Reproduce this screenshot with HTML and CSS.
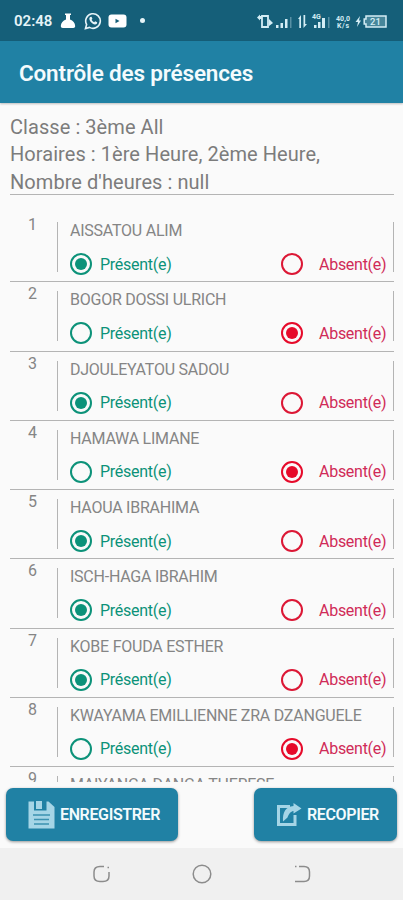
FILE: index.html
```
<!DOCTYPE html>
<html lang="fr">
<head>
  <meta charset="UTF-8" />
  <meta name="viewport" content="width=device-width, initial-scale=1.0"/>
  <title>Contrôle des présences</title>
  <link rel="stylesheet" href="styles.css">
</head>
<body>
  <div class="status-bar">
    <span class="clock">02:48</span>
    <svg class="flask" width="16" height="16" viewBox="0 0 16 16"><path d="M5 .5h6V2h-1v4.500c3 1 5 3.500 5.200 6.500 0 1.300-.7 2-2 2H2.800c-1.300 0-2-.7-2-2C1 10 3 7.500 6 6.500V2H5z" fill="#fff"/></svg>
    <svg class="whatsapp" width="18" height="18" viewBox="0 0 18 18"><path d="M1.500 16.500l1.100-4A7.300 7.300 0 1 1 5.500 15.400z" fill="none" stroke="#e6f4f8" stroke-width="1.600"/><path d="M6.200 5l1.300-.2.900 2-.8 1c.6 1.200 1.400 2 2.600 2.500l1-1 2 1c0 1.500-1 2.300-2.200 2.200C8 12 5.500 9 5.300 6.800c0-.8.400-1.500.9-1.800z" fill="#e6f4f8"/></svg>
    <svg class="youtube" width="19" height="14" viewBox="0 0 19 14"><rect x=".5" y=".5" width="18" height="13" rx="3" fill="#fff"/><path d="M7.500 4.800v4.400L11.500 7z" fill="#155f79"/></svg>
    <span class="dot"></span>
    <svg class="signals" width="134" height="20" viewBox="0 0 134 20" fill="#d3edf5">
      <path d="M5 5h6v11H5z" fill="none" stroke="#d3edf5" stroke-width="1.800"/>
      <path d="M0 6.500l3-3V5h2v3H3v1.500zM12 8l4 4-4 3z"/>
      <path d="M19 14h2.500v3H19zM23.500 12H26v5h-2.500zM28 8h2.500v9H28z"/>
      <path d="M33 6h1.500v11H33z" opacity=".35"/>
      <path d="M41 8l3-4v13h-1.700V8zM46.500 4h1.700v9H50l-3.500 4z"/>
      <text x="55" y="8" font-size="7" font-weight="700">4G</text>
      <path d="M57 14h2.500v3H57zM61 11h2.500v6H61zM65 7h3v10h-3z"/>
      <path d="M71 6h1.500v11H71z" opacity=".35"/>
      <text x="79" y="9.500" font-size="7" font-weight="700" textLength="14">40,0</text>
      <text x="80" y="17" font-size="7" font-weight="700" textLength="12">K/s</text>
      <path d="M103 5l-4.500 6h2.500l-1 5 4-6.500h-2z"/>
      <path d="M109 5h20v11h-20v-3h-1.800V8h1.800z" fill="#47869a" stroke="#d3edf5" stroke-width="1.500"/>
      <text x="113" y="14" font-size="9.500" font-weight="500">21</text>
    </svg>
  </div>

  <header class="app-bar">
    <h1>Contrôle des présences</h1>
  </header>

  <main class="content">
    <div class="infos">
      <div>Classe : 3ème All</div>
      <div>Horaires : 1ère Heure, 2ème Heure,</div>
      <div>Nombre d'heures : null</div>
    </div>
    <div class="liste" id="liste">
      <!-- Student rows -->
    </div>
  </main>

  <div class="actions">
    <button class="btn btn-save">
      <svg width="27" height="28" viewBox="0 0 27 28"><path d="M.500.500h20L26.500 6v21.500H.500z" fill="#a5d5e6"/><path d="M6 0h12.500v9.500H6z" fill="#2081a4"/><path d="M8 0h6v8H8z" fill="#a5d5e6"/><path d="M5 14h17M6 18.500h15M6 23h15" stroke="#3b91b0" stroke-width="1.700"/></svg>
      <span>ENREGISTRER</span>
    </button>
    <button class="btn btn-copy">
      <svg width="26" height="24" viewBox="0 0 26 24"><path d="M14 3.500H2.500v18H19V12" fill="none" stroke="#a5d5e6" stroke-width="3"/><path d="M7 18.500C6.500 9 9.500 4 17.500 3V0l8 5.500-8 5V8c-3.500.5-5 4-6 6.500z" fill="#a5d5e6"/></svg>
      <span>RECOPIER</span>
    </button>
  </div>

  <nav class="nav-bar">
    <svg width="20" height="20" viewBox="0 0 20 20"><path d="M12 2.500H8Q2 2.500 2 8v4q0 5.500 6 5.500h3q6 0 6-5.500V8" /><path d="M15.500 3.500h1.500"/></svg>
    <svg width="20" height="20" viewBox="0 0 20 20"><circle cx="10" cy="10" r="8.800"/></svg>
    <svg width="20" height="20" viewBox="0 0 20 20"><path d="M7 2.500h5q5.500 0 5.500 5.500v4q0 5.500-5.500 5.500H3"/><path d="M3 2.500h1.500"/></svg>
  </nav>

  <script>
    const eleves = [
      { nom: "AISSATOU ALIM", present: true },
      { nom: "BOGOR DOSSI ULRICH", present: false },
      { nom: "DJOULEYATOU SADOU", present: true },
      { nom: "HAMAWA LIMANE", present: false },
      { nom: "HAOUA IBRAHIMA", present: true },
      { nom: "ISCH-HAGA IBRAHIM", present: true },
      { nom: "KOBE FOUDA ESTHER", present: true },
      { nom: "KWAYAMA EMILLIENNE ZRA DZANGUELE", present: false },
      { nom: "MAIYANGA DANGA THERESE" }
    ];

    function renderChoix(eleve) {
      if (eleve.present === undefined) return "";
      return `
        <div class="choix">
          <span class="radio present ${eleve.present ? "checked" : ""}"></span>
          <span class="label-present">Présent(e)</span>
          <span class="radio absent ${eleve.present ? "" : "checked"}"></span>
          <span class="label-absent">Absent(e)</span>
        </div>
      `;
    }

    document.getElementById("liste").innerHTML = eleves.map((eleve, i) => `
      <div class="eleve">
        <div class="numero">${i + 1}</div>
        <div class="fiche">
          <div class="nom">${eleve.nom}</div>
          ${renderChoix(eleve)}
        </div>
      </div>
    `).join("");
  </script>
</body>
</html>
```
FILE: styles.css
```
* {
  box-sizing: border-box;
}

body {
  font-family: Roboto, "Liberation Sans", sans-serif;
  margin: 0;
  height: 900px;
  display: flex;
  flex-direction: column;
  overflow: hidden;
  background: #fafafa;
}

.status-bar {
  height: 41px;
  flex: none;
  display: flex;
  align-items: center;
  padding: 0 13px 0 14px;
  background: #155f79;
  color: #e6f4f8;
}

.clock {
  width: 40px;
  font-size: 15px;
  font-weight: 600;
}

.flask {
  margin-left: 6px;
}

.whatsapp {
  margin-left: 8px;
}

.youtube {
  margin-left: 6px;
}

.dot {
  width: 5px;
  height: 5px;
  margin-left: 13px;
  border-radius: 50%;
  background: #e6f4f8;
}

.signals {
  margin-left: auto;
  margin-right: -1px;
}

.app-bar {
  height: 62px;
  flex: none;
  display: flex;
  align-items: center;
  padding: 2px 19px 0;
  background: #2081a4;
  box-shadow: 0 1px 2px rgba(0,0,0,0.25);
}

h1 {
  margin: 0;
  font-size: 22.500px;
  font-weight: 600;
  letter-spacing: -0.17px;
  color: #f4fbfd;
  white-space: nowrap;
}

.content {
  height: 679px;
  flex: none;
  padding: 10px 9px 0 10px;
  overflow: hidden;
}

.infos {
  height: 82px;
  padding-top: 1px;
  border-bottom: 1px solid #b4b4b4;
  color: #7c7c7c;
  font-size: 20px;
  line-height: 27.400px;
  letter-spacing: 0.06px;
  white-space: nowrap;
}

.liste {
  padding-top: 18px;
}

.eleve {
  height: 69.250px;
  display: flex;
  border-bottom: 1px solid #b4b4b4;
  color: #858585;
}

.numero {
  width: 47px;
  padding-top: 3px;
  padding-right: 2px;
  font-size: 16px;
  line-height: 18px;
  text-align: center;
}

.fiche {
  height: 50px;
  flex: 1;
  margin-top: 9px;
  padding-left: 12px;
  border-left: 1px solid #b4b4b4;
  border-right: 1px solid #b4b4b4;
}

.nom {
  height: 18px;
  font-size: 16px;
  line-height: 18px;
  letter-spacing: -0.24px;
  white-space: nowrap;
}

.choix {
  height: 24px;
  margin-top: 12px;
  display: flex;
  align-items: center;
  font-size: 16px;
  letter-spacing: -0.27px;
}

.radio {
  width: 22px;
  height: 22px;
  flex: none;
  border: 2px solid;
  border-radius: 50%;
}

.radio.checked::before {
  content: "";
  display: block;
  width: 12px;
  height: 12px;
  margin: 3px;
  border-radius: 50%;
  background: currentColor;
}

.present, .label-present {
  color: #0c9279;
}

.absent {
  color: #dc1735;
}

.absent.checked {
  color: #e60a2a;
}

.label-present {
  width: 189px;
  padding-left: 8px;
}

.label-absent {
  padding-left: 16px;
  color: #d02b58;
  white-space: nowrap;
}

.actions {
  height: 66px;
  flex: none;
  display: flex;
  justify-content: space-between;
  align-items: flex-start;
  padding: 6px 6px 0;
}

.btn {
  height: 53px;
  display: flex;
  align-items: center;
  border: none;
  border-radius: 7px;
  background: #2081a4;
  color: #f4fbfd;
  font-family: inherit;
  font-size: 16px;
  font-weight: 600;
  letter-spacing: -0.36px;
  white-space: nowrap;
  box-shadow: 0 1px 3px rgba(0,0,0,0.4);
}

.btn span {
  line-height: 24px;
  padding-top: 1px;
}

.btn-save {
  width: 172px;
  padding: 0 0 0 22px;
  gap: 5px;
}

.btn-copy {
  width: 143px;
  padding: 0 0 0 22px;
  gap: 5px;
}

.nav-bar {
  height: 52px;
  flex: none;
  display: flex;
  justify-content: center;
  align-items: center;
  gap: 80px;
  background: #f0f0f0;
}

.nav-bar svg {
  fill: none;
  stroke: #8c8c8c;
  stroke-width: 1.500;
}
```
